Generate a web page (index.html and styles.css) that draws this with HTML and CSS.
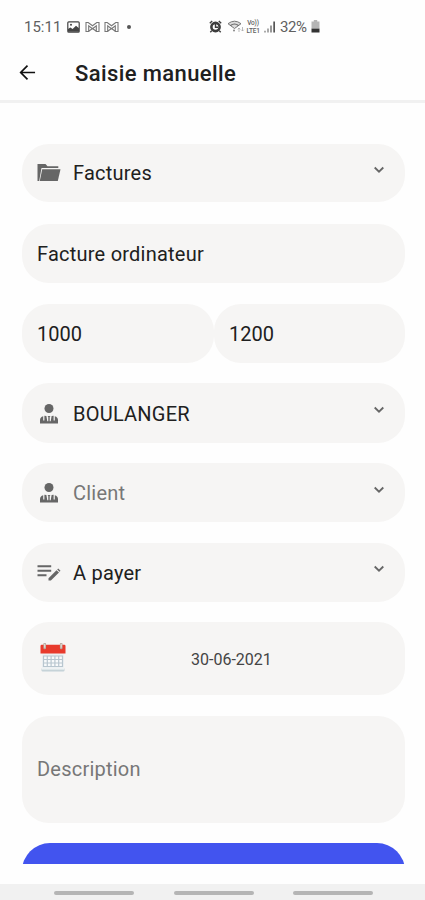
FILE: index.html
```html
<!DOCTYPE html>
<html lang="fr">
<head>
<meta charset="utf-8">
<meta name="viewport" content="width=device-width, initial-scale=1">
<title>Saisie manuelle</title>
<link rel="stylesheet" href="styles.css">
</head>
<body>
<svg width="0" height="0" class="defs" aria-hidden="true">
  <symbol id="chevron" viewBox="0 0 12 8"><path d="M1.7 1.5 6 5.7l4.3-4.2" fill="none" stroke="#666" stroke-width="1.8"/></symbol>
  <symbol id="person" viewBox="0 0 20 22">
    <circle cx="10" cy="5.5" r="4.5"/>
    <path d="M1 20.5v-3.2Q1 14 4.2 13.2v4.3h1.2v-4.7l2 .2.9 5.2h1V14l-.8-1h3l-.8 1v4.2h1l.9-5.2 2-.2v4.7h1.2v-4.3Q19 14 19 17.3v3.2z"/>
  </symbol>
  <symbol id="gmail" viewBox="0 0 15 12"><path d="M1 1.5v9h2.7V4.8l3.8 2.9 3.8-2.9v5.7H14v-9h-2.2L7.5 4.7 3.2 1.5zM4 10l3.5-2.5L11 10" fill="none" stroke="#777" stroke-width="1.1"/></symbol>
</svg>
<header>
  <div class="status">
    <span class="time">15:11</span>
    <svg class="pic" viewBox="0 0 13 12"><rect x=".8" y=".8" width="11.4" height="10.4" rx="1" fill="none" stroke="#444" stroke-width="1.2"/><circle cx="4" cy="3.7" r="1" fill="#444"/><path d="M1 10.8V8l2.3-1.6L5.6 8l3.4-3.3 3 2.5v3.6z" fill="#444"/></svg>
    <svg class="mail"><use href="#gmail"/></svg>
    <svg class="mail second"><use href="#gmail"/></svg>
    <span class="dot"></span>
    <svg class="alarm" viewBox="0 0 13 13"><circle cx="6.5" cy="7" r="4.1" fill="none" stroke="#3c3c3c" stroke-width="2.6"/><path d="M6.5 4v3.2H9M.8 3.2 3.2 1M12.2 3.2 9.8 1M2.8 10.6l-1.5 1.7M10.2 10.6l1.5 1.7" fill="none" stroke="#3c3c3c" stroke-width="1.4"/></svg>
    <svg class="wifi" viewBox="0 0 18 13"><path d="M1 3.7Q7.5-1.3 14 3.7L7.5 8.5z" fill="#ddd" stroke="#777"/><path d="M3.5 5.5q4-3 8 0" fill="none" stroke="#666" stroke-width="1.2"/><circle cx="7" cy="10.5" r="1" fill="#888"/><path d="M12 12V8m-1.3 1.3L12 8l1.3 1.3M15.5 7v4m-1.3-1.3 1.3 1.3 1.3-1.3" fill="none" stroke="#aaa" stroke-width=".8"/></svg>
    <span class="volte">Vo))<br>LTE1</span>
    <svg class="signal" viewBox="0 0 12 12"><path d="M0 11.5V9.7h2v1.8zM3 11.5V7.5h2v4z" fill="#aaa"/><path d="M6 11.5V4.5h2v7z" fill="#999"/><path d="M9.3 11.5V.5H11v11z" fill="#555"/></svg>
    <span class="percent">32%</span>
    <svg class="battery" viewBox="0 0 9 13"><path d="M2.8 0h3.4v1.5H8.5V9h-8V1.5h2.3z" fill="#b5b5b5"/><path d="M.5 8.7h8v3.8h-8z" fill="#333"/></svg>
  </div>
  <div class="titlebar">
    <svg class="back" viewBox="0 0 18 18"><path d="M17 9H2M9 1.8 1.8 9 9 16.2" fill="none" stroke="#111" stroke-width="1.8"/></svg>
    <h1>Saisie manuelle</h1>
  </div>
</header>
<main>
  <div class="field first">
    <svg class="icon" viewBox="0 0 24 20"><path d="M.5 1h8l2 2.2h10.8V5H4.5L2.2 18H.5z"/><path d="M5.2 6.3h18.3L20.8 18H2.8z"/></svg>
    <span>Factures</span><svg class="chevron"><use href="#chevron"/></svg>
  </div>
  <div class="field">Facture ordinateur</div>
  <div class="pair"><div class="field">1000</div><div class="field">1200</div></div>
  <div class="field caps">
    <svg class="icon person"><use href="#person"/></svg>
    <span>BOULANGER</span><svg class="chevron"><use href="#chevron"/></svg>
  </div>
  <div class="field placeholder">
    <svg class="icon person"><use href="#person"/></svg>
    <span>Client</span><svg class="chevron"><use href="#chevron"/></svg>
  </div>
  <div class="field">
    <svg class="icon" viewBox="0 0 24 20"><path d="M.5 2.2h13.7v2H.5zm0 4.5h13.7v2H.5zm0 4.5h9v2h-9z"/><path d="m11.5 15.2 8-8 2.5 2.3-8.1 8.1h-2.4zM20.2 6.5l1-.9 2.3 2.2-1 1z"/></svg>
    <span>A payer</span><svg class="chevron"><use href="#chevron"/></svg>
  </div>
  <div class="field date">
    <svg class="calendar" viewBox="0 0 26 30">
      <path d="M2.5 10h21.7l-.7 18.5H2z" fill="#edf1f3"/>
      <path d="M1.5 25.5h23v1.8q0 1.2-1.2 1.2H2.7q-1.2 0-1.2-1.2z" fill="#c6d3d8"/><path d="M2 25.3h22v1.2H2z" fill="#f6fafb"/>
      <path d="M3.5 13h19v10.5h-19zm0 3.5h19M3.5 20h19M7.3 13v10.5M11.1 13v10.5M14.9 13v10.5M18.7 13v10.5" fill="#f8fafb" stroke="#b8c6cf" stroke-width="1.2"/>
      <path d="M.5 3q0-1.2 1.2-1.2h22.6q1.2 0 1.2 1.2v7.5H.5z" fill="#e83b2d"/>
      <path d="M4.7 1v4M21.2 1v4" stroke="#b9aaa0" stroke-width="2.6" stroke-linecap="round"/><path d="M4.7 1.3v3M21.2 1.3v3" stroke="#e7e2dc" stroke-linecap="round"/>
    </svg>
    <span>30-06-2021</span>
  </div>
  <div class="field description placeholder">Description</div>
  <div class="submit"></div>
</main>
<nav><i></i><i></i><i></i></nav>
</body>
</html>
```
FILE: styles.css
```css
* { box-sizing: border-box; }
body {
  margin: 0;
  height: 900px;
  display: flex;
  flex-direction: column;
  overflow: hidden;
  background: #fefefe;
  color: #202020;
  font-family: Roboto, "Liberation Sans", sans-serif;
}
svg { display: block; flex: none; }
.defs { position: absolute; }
header {
  flex: none;
  height: 103px;
  border-bottom: 3px solid #f1f1f1;
}
.status {
  display: flex;
  align-items: center;
  height: 45px;
  padding: 8px 0 0 24px;
  font-size: 15px;
  color: #606060;
}
.time { width: 43px; }
.pic { width: 13px; height: 12px; }
.mail { width: 15px; height: 12px; margin-left: 5px; }
.mail.second { margin-left: 4px; }
.dot { width: 4px; height: 4px; margin-left: 8px; border-radius: 50%; background: #555; }
.alarm { width: 13px; height: 13px; margin-left: 78px; }
.wifi { width: 18px; height: 13px; margin-left: 5px; }
.volte {
  width: 16px;
  font-size: 6.5px;
  font-weight: 500;
  line-height: 8px;
  letter-spacing: -.2px;
  text-align: center;
}
.signal { width: 12px; height: 12px; margin-left: 3px; }
.percent { width: 30px; margin-left: 4px; letter-spacing: -.4px; }
.battery { width: 9px; height: 13px; margin-left: 1px; }
.titlebar { display: flex; align-items: center; height: 55px; padding-left: 19px; }
.back { width: 17px; height: 17px; margin-top: -1px; }
h1 {
  margin: 2px 0 0 39px;
  font-size: 22px;
  font-weight: 500;
  line-height: 28px;
  letter-spacing: .4px;
}
main {
  display: flex;
  flex-direction: column;
  gap: 20.4px;
  height: 761px;
  flex: none;
  padding: 41px 20px 0 22px;
  overflow: hidden;
}
.field {
  flex: none;
  display: flex;
  align-items: center;
  height: 59.3px;
  padding: 1px 20px 0 15px;
  border-radius: 27px;
  background: #f6f5f4;
  font-size: 20px;
  letter-spacing: .23px;
}
.first { height: 58px; margin-bottom: 1.6px; padding-top: 0; }
.pair { display: grid; grid-template-columns: 192px 191px; }
.pair .field { letter-spacing: 0; padding-top: 2px; }
.placeholder { color: #777; }
.icon { width: 24px; height: 20px; margin-right: 12px; fill: #666; }
.person { width: 20px; height: 22px; margin: 0 14px 0 2px; }
.chevron { width: 12px; height: 8px; margin: -7px 0 0 auto; }
.date { height: 73px; padding-left: 18px; font-size: 16px; letter-spacing: 0; color: #444; }
.calendar { width: 26px; height: 30px; margin-top: -2px; }
.date span { margin-left: 125px; }
.description { height: 107px; padding-top: 0; }
.submit { flex: none; height: 56px; border-radius: 28px; background: #4254ef; }
nav {
  display: flex;
  gap: 39.5px;
  height: 16px;
  margin-top: auto;
  padding: 6.5px 0 0 54px;
  background: #f1f1f1;
}
nav i { width: 80px; height: 4px; border-radius: 2px; background: #b5b5b5; }
```
